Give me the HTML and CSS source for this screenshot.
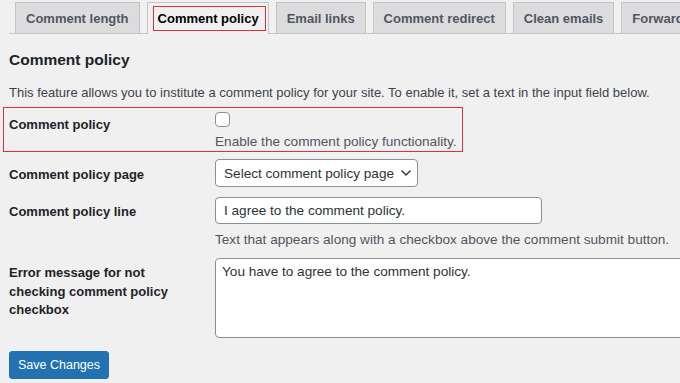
FILE: index.html
```html
<!DOCTYPE html>
<html lang="en">
<head>
<meta charset="utf-8">
<title>Comment policy</title>
<link rel="stylesheet" href="styles.css">
</head>
<body>
<div class="wrap">
  <nav class="tabs">
    <a class="tab">Comment length</a>
    <a class="tab active"><span class="mark">Comment policy</span></a>
    <a class="tab">Email links</a>
    <a class="tab">Comment redirect</a>
    <a class="tab">Clean emails</a>
    <a class="tab">Forward</a>
  </nav>

  <h2 class="title">Comment policy</h2>
  <p class="intro">This feature allows you to institute a comment policy for your site. To enable it, set a text in the input field below.</p>

  <div class="row row-check">
    <div class="label">Comment policy</div>
    <div class="field">
      <span class="checkbox"></span>
      <div class="desc">Enable the comment policy functionality.</div>
    </div>
  </div>

  <div class="row row-select">
    <div class="label">Comment policy page</div>
    <div class="field">
      <div class="select">
        <span>Select comment policy page</span>
        <svg class="chev" width="10" height="6" viewBox="0 0 10 6"><path d="M1 1 L5 5 L9 1" fill="none" stroke="#2c3338" stroke-width="1.4" stroke-linecap="round" stroke-linejoin="round"/></svg>
      </div>
    </div>
  </div>

  <div class="row row-input">
    <div class="label">Comment policy line</div>
    <div class="field">
      <div class="input">I agree to the comment policy.</div>
      <div class="desc desc-line">Text that appears along with a checkbox above the comment submit button.</div>
    </div>
  </div>

  <div class="row row-area">
    <div class="label label-wrap">Error message for not checking comment policy checkbox</div>
    <div class="field">
      <div class="textarea">You have to agree to the comment policy.</div>
    </div>
  </div>

  <button class="save">Save Changes</button>
</div>
</body>
</html>
```

FILE: styles.css
```css
html, body {
  margin: 0;
  padding: 0;
  overflow: hidden;
  background: #f0f0f1;
  width: 680px;
  height: 383px;
}
body {
  font-family: "Liberation Sans", Arial, sans-serif;
  font-size: 13px;
  color: #3c434a;
}
.wrap {
  padding: 2px 0 0 9px;
}
.tabs {
  display: flex;
  gap: 7px;
  padding-left: 6px;
  border-bottom: 1px solid #c3c4c7;
  height: 31px;
  white-space: nowrap;
}
.tab {
  display: flex;
  align-items: center;
  height: 31px;
  box-sizing: border-box;
  padding: 0 10px;
  border: 1px solid #c3c4c7;
  border-bottom: none;
  background: #dcdcde;
  color: #50575e;
  font-weight: bold;
  font-size: 13px;
  flex-shrink: 0;
}
.tab.active {
  background: #f0f0f1;
  color: #000;
  height: 32px;
  padding: 3px 2px 4px 5px;
  align-items: flex-start;
}
.mark {
  display: flex;
  align-items: center;
  height: 25px;
  box-sizing: border-box;
  padding: 0 6px 0 4px;
  border: 1px solid #e0313a;
}
.title {
  margin: 16px 0 0;
  font-size: 15.5px;
  line-height: 20px;
  color: #1d2327;
  font-weight: bold;
}
.intro {
  margin: 14px 0 0;
  line-height: 18px;
}
.row {
  display: flex;
}
.label {
  width: 206px;
  flex-shrink: 0;
  font-weight: bold;
  color: #1d2327;
  line-height: 18px;
  font-size: 13px;
}
.field {
  font-size: 13.6px;
}
.row-check {
  margin: 5px 0 0 -6px;
  width: 460px;
  box-sizing: border-box;
  border: 1px solid #e0313a;
  padding: 0 0 0 5px;
}
.row-check .label {
  padding-top: 8px;
}
.row-check .field {
  padding-top: 4px;
}
.checkbox {
  display: block;
  width: 15px;
  height: 15px;
  box-sizing: border-box;
  border: 1px solid #8c8f94;
  border-radius: 4px;
  background: #fff;
}
.desc {
  line-height: 18px;
  color: #50575e;
}
.row-check .desc {
  margin-top: 6px;
}
.row-select {
  margin-top: 7px;
}
.row-select .label {
  padding-top: 7px;
}
.select {
  display: flex;
  align-items: center;
  gap: 7px;
  width: 203px;
  height: 28px;
  box-sizing: border-box;
  padding: 0 8px;
  background: #fff;
  border: 1px solid #8c8f94;
  border-radius: 4px;
  color: #2c3338;
  white-space: nowrap;
}
.chev {
  flex-shrink: 0;
  margin-left: auto;
}
.row-input {
  margin-top: 10px;
}
.row-input .label {
  padding-top: 6px;
}
.input {
  width: 327px;
  height: 27px;
  box-sizing: border-box;
  padding: 0 8px;
  display: flex;
  align-items: center;
  background: #fff;
  border: 1px solid #8c8f94;
  border-radius: 4px;
  color: #2c3338;
}
.desc-line {
  margin-top: 7px;
}
.row-area {
  margin-top: 9px;
}
.label-wrap {
  width: 185px;
  padding-right: 21px;
  padding-top: 6px;
  line-height: 18.5px;
}
.textarea {
  width: 520px;
  height: 80px;
  box-sizing: border-box;
  padding: 4px 6px;
  line-height: 18px;
  background: #fff;
  border: 1px solid #8c8f94;
  border-radius: 4px;
  color: #2c3338;
}
.save {
  display: block;
  margin-top: 13px;
  height: 28px;
  width: 100px;
  padding: 0;
  background: #2271b1;
  border: 1px solid #2271b1;
  border-radius: 3px;
  color: #fff;
  font-family: "Liberation Sans", Arial, sans-serif;
  font-size: 12.5px;
}
```
